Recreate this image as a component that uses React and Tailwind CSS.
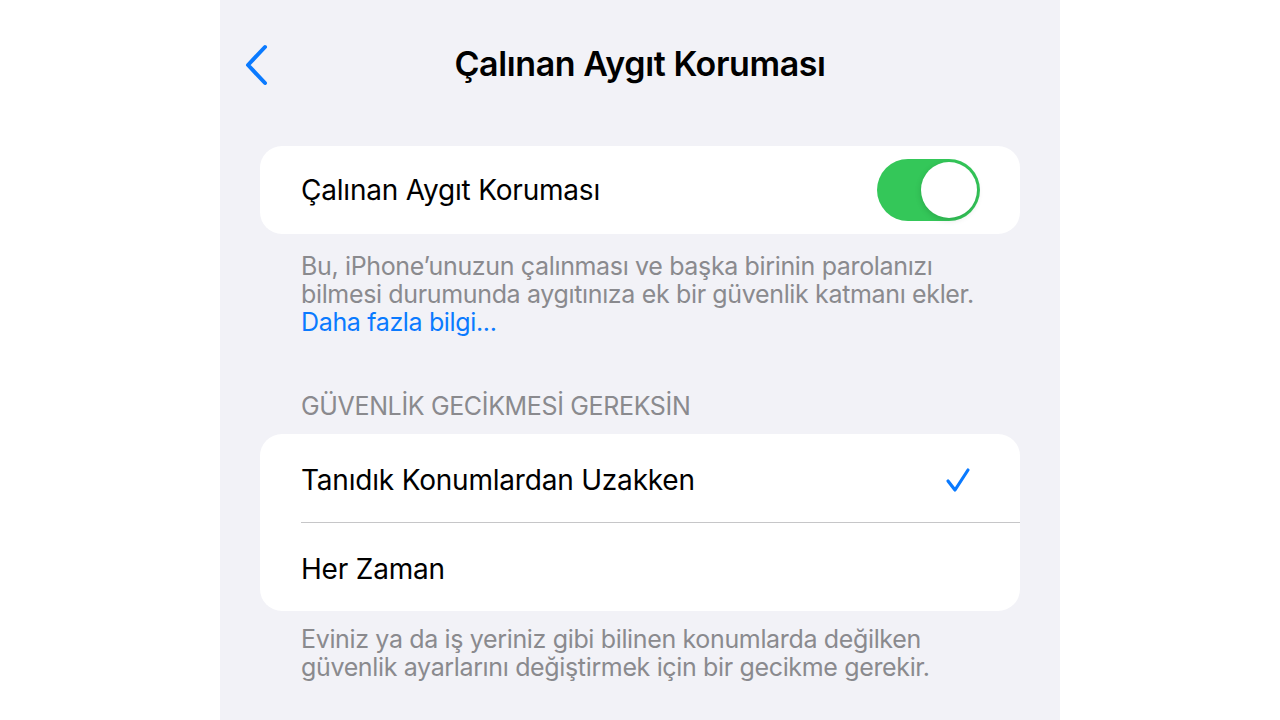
import React, { useState } from 'react';

const font = { fontFamily: 'Inter, "Noto Sans", sans-serif' };

const Toggle = ({ on, onChange }) => (
    <button
        onClick={() => onChange(!on)}
        className={`w-[103px] h-[62px] rounded-full p-[3px] flex items-center ${on ? 'bg-[#34c759] justify-end' : 'bg-[#e5e5ea] justify-start'}`}
    >
        <span className="w-[56px] h-[56px] rounded-full bg-white shadow-[0_2px_6px_rgba(0,0,0,0.15)]" />
    </button>
);

const Check = () => (
    <svg width="28" height="28" viewBox="0 0 28 28" fill="none">
        <path d="M4 15l7 9L24 4" stroke="#0a7aff" strokeWidth="3.2" strokeLinecap="round" strokeLinejoin="round" />
    </svg>
);

export default function App() {
    const [enabled, setEnabled] = useState(true);
    const [mode, setMode] = useState('away');

    return (
        <div className="min-h-screen bg-white flex justify-center" style={font}>
            <div className="w-[840px] h-[720px] bg-[#f2f2f7] overflow-hidden">
                <div className="relative h-[130px] flex items-center justify-center">
                    <button className="absolute left-[24px] top-[44px]">
                        <svg width="26" height="42" viewBox="0 0 26 42" fill="none">
                            <path d="M21 3L4 21l17 18" stroke="#0a7aff" strokeWidth="4" strokeLinecap="round" strokeLinejoin="round" />
                        </svg>
                    </button>
                    <h1 className="text-[34px] leading-[40px] font-semibold text-black tracking-[-0.4px] -mt-[2px]">Çalınan Aygıt Koruması</h1>
                </div>

                <div className="px-[40px] mt-[16px]">
                    <div className="bg-white rounded-[22px] h-[88px] pl-[41px] pr-[40px] flex items-center justify-between">
                        <span className="text-[28px] text-black tracking-[-0.2px]">Çalınan Aygıt Koruması</span>
                        <Toggle on={enabled} onChange={setEnabled} />
                    </div>
                    <p className="pl-[41px] pr-[30px] pt-[18px] text-[25px] leading-[28px] text-[#8a8a8e] tracking-[-0.35px]">
                        Bu, iPhone’unuzun çalınması ve başka birinin parolanızı bilmesi durumunda aygıtınıza ek bir güvenlik katmanı ekler.{' '}
                        <span className="text-[#0a7aff]">Daha fazla bilgi...</span>
                    </p>

                    <div className="pl-[41px] mt-[56px] text-[25px] leading-[28px] text-[#8a8a8e] uppercase tracking-[-0.35px]">
                        GÜVENLİK GECİKMESİ GEREKSİN
                    </div>
                    <div className="mt-[14px] bg-white rounded-[22px] overflow-hidden">
                        <button onClick={() => setMode('away')} className="w-full h-[88px] pt-[3px] pl-[41px] pr-[48px] flex items-center justify-between">
                            <span className="text-[28px] text-black tracking-[-0.2px]">Tanıdık Konumlardan Uzakken</span>
                            {mode === 'away' && <Check />}
                        </button>
                        <div className="ml-[41px] h-px bg-[#c6c6c8]" />
                        <button onClick={() => setMode('always')} className="w-full h-[88px] pt-[3px] pl-[41px] pr-[48px] flex items-center justify-between">
                            <span className="text-[28px] text-black tracking-[-0.2px]">Her Zaman</span>
                            {mode === 'always' && <Check />}
                        </button>
                    </div>
                    <p className="pl-[41px] pr-[30px] pt-[14px] text-[25px] leading-[28px] text-[#8a8a8e] tracking-[-0.35px]">
                        Eviniz ya da iş yeriniz gibi bilinen konumlarda değilken güvenlik ayarlarını değiştirmek için bir gecikme gerekir.
                    </p>
                </div>
            </div>
        </div>
    );
}
